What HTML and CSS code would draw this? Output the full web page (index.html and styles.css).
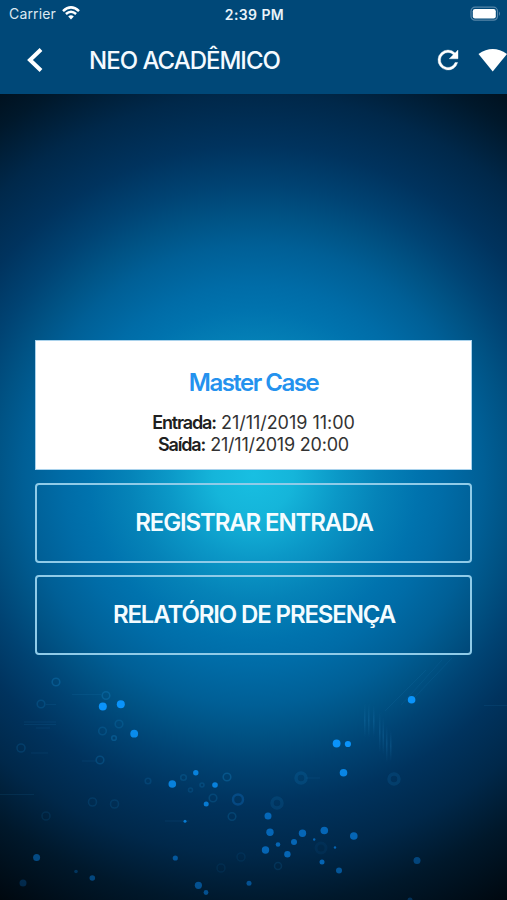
FILE: index.html
```html
<!DOCTYPE html>
<html lang="pt-BR">
<head>
<meta charset="utf-8">
<title>Neo Acadêmico</title>
<link rel="stylesheet" href="styles.css">
</head>
<body>
<div class="screen">
  <header class="top">
    <div class="status">
      <div class="carrier"><span>Carrier</span>
        <svg width="18" height="14" viewBox="0 0 18 14" fill="none" stroke="#fff" stroke-width="2.5"><path d="M1 5.1Q9-2.3 17 5.1M3.9 8Q9 3.4 14.1 8"/><path d="M6.2 10.4Q9 8.2 11.8 10.4L9 13.4Z" fill="#fff" stroke="none"/></svg>
      </div>
      <div class="time">2:39 PM</div>
      <svg class="battery" width="31" height="16" viewBox="0 0 31 16"><rect x="1" y="1.2" width="26.5" height="13" rx="4" fill="none" stroke="#5585a8" stroke-width="1.2"/><rect x="2.8" y="3" width="23" height="9.4" rx="2.2" fill="#fff"/><path d="M29 5.5Q31 7.7 29 9.9Z" fill="#5585a8"/></svg>
    </div>
    <nav class="bar">
      <svg class="back" width="16" height="26" viewBox="0 0 16 26" fill="none" stroke="#fff" stroke-width="4"><path d="M14 2.5L3 13L14 23.5"/></svg>
      <h1>NEO ACADÊMICO</h1>
      <svg class="reload" width="30" height="30" viewBox="0 0 24 24" fill="#fff" stroke="#fff" stroke-width=".3"><path d="M17.65 6.35A7.96 7.96 0 0 0 12 4a8 8 0 1 0 7.73 10h-2.08A6 6 0 1 1 12 6c1.66 0 3.14.69 4.22 1.78L13 11h7V4z"/></svg>
      <svg class="signal" width="30" height="24" viewBox="0 0 30 24" fill="#fff"><path d="M.5 6Q14.7-4 29 6L14.7 23.5Z"/></svg>
    </nav>
  </header>
  <main class="content">
    <svg class="backdrop" width="507" height="806" viewBox="0 94 507 806">
      <defs><linearGradient id="fade" x1="0" y1="0" x2="0" y2="1"><stop offset="0" stop-color="#2288c5" stop-opacity="0"/><stop offset=".5" stop-color="#2288c5" stop-opacity=".22"/><stop offset="1" stop-color="#2288c5" stop-opacity="0"/></linearGradient></defs>
      <g fill="none" stroke="#1687c8" stroke-width="1.6" opacity=".32">
        <circle cx="56" cy="682" r="3.8"/><circle cx="106" cy="695.5" r="3.8"/><circle cx="41" cy="704" r="3.8" opacity=".7"/><circle cx="119" cy="724" r="3.8" opacity=".7"/><circle cx="102.500" cy="731" r="3.8" opacity=".7"/><circle cx="114" cy="738" r="2.300"/><circle cx="21" cy="748" r="4" opacity=".6"/><circle cx="100" cy="760" r="3.8" opacity=".8"/>
        <circle cx="148" cy="781" r="2.8" opacity=".6"/><circle cx="183.500" cy="777.500" r="2.800" opacity=".7"/><circle cx="227" cy="777" r="3.8"/><circle cx="202" cy="785" r="2" opacity=".7"/><circle cx="190.500" cy="790" r="2" opacity=".6"/><circle cx="213" cy="798" r="3.8" opacity=".7"/><circle cx="238" cy="799.500" r="5" stroke="#1278d0" stroke-width="2.5"/><circle cx="232" cy="816.500" r="3.800" opacity=".7"/>
        <circle cx="92.500" cy="802" r="4" opacity=".5"/><circle cx="114.500" cy="804" r="4" opacity=".5"/><circle cx="46" cy="816" r="4" opacity=".4"/><circle cx="241" cy="857" r="4" opacity=".3"/><circle cx="221" cy="868" r="4" opacity=".3"/><circle cx="278" cy="866" r="3.500" opacity=".5"/>
        <circle cx="301" cy="778" r="5" stroke-width="3.5" opacity=".55"/><circle cx="394" cy="779" r="5" stroke-width="3.5" opacity=".5"/><circle cx="277" cy="803" r="5" stroke-width="3.500" opacity=".5"/><circle cx="321" cy="848" r="5" stroke-width="3" opacity=".25"/>
      </g>
      <g stroke="#2288c5" stroke-width="1" opacity=".12" fill="none">
        <path d="M72 694.500h29M46 704.500h10M24 722h32M24 724.500h32M36 728h14M31 753h17M82 761h14M0 794.500h34M306 778h14M484 705.500h23M165 821h24M401 705L442 660M385 711L426 670M415 697L452 658"/>
      </g>
      <g fill="url(#fade)"><rect x="364" y="703" width="1.5" height="35"/><rect x="368" y="703" width="1.500" height="35"/><rect x="373" y="705" width="1.500" height="32"/><rect x="379" y="711" width="1.500" height="42"/><rect x="382.500" y="717" width="1.500" height="38"/><rect x="386" y="725" width="1.500" height="38"/><rect x="390" y="730" width="1.500" height="32"/></g>
      <g fill="#0a93fa">
        <circle cx="102.800" cy="706.500" r="4"/><circle cx="120.800" cy="704.300" r="4"/><circle cx="134.200" cy="733.700" r="3.900" opacity=".9"/><circle cx="411.600" cy="699.700" r="3.800"/><circle cx="336.600" cy="743.500" r="3.900"/><circle cx="347.900" cy="744" r="3.100"/><circle cx="343.500" cy="772.700" r="3.800" opacity=".85"/>
        <circle cx="195.800" cy="772.800" r="2.700" opacity=".8"/><circle cx="172.300" cy="784" r="3.800" opacity=".8"/><circle cx="215" cy="785" r="2.800" opacity=".8"/><circle cx="206.200" cy="804" r="2.500" opacity=".75"/><circle cx="185" cy="821.300" r="1.500" opacity=".75"/>
      </g>
      <g fill="#087cdb" opacity=".74">
        <circle cx="268" cy="816" r="3.500"/><circle cx="270" cy="832.300" r="3.700"/><circle cx="302.500" cy="833.300" r="3.700"/><circle cx="324.300" cy="830.500" r="3.800"/><circle cx="353.800" cy="836" r="3.800"/><circle cx="294" cy="842" r="3"/><circle cx="278" cy="844.500" r="2.300"/><circle cx="265.500" cy="850" r="3.700"/><circle cx="287.400" cy="854.200" r="3.200"/><circle cx="314.200" cy="839.500" r="1.200"/><circle cx="335" cy="847.500" r="1.200"/><circle cx="322" cy="862" r="2.500"/><circle cx="339" cy="870.500" r="3" opacity=".8"/><circle cx="417" cy="860.500" r="3.500" opacity=".6"/>
        <circle cx="36.600" cy="857.500" r="3.500" opacity=".7"/><circle cx="92.300" cy="878" r="2.800" opacity=".65"/><circle cx="76" cy="871.500" r="1.800" opacity=".4"/><circle cx="23" cy="883" r="3.500" opacity=".35"/><circle cx="175.300" cy="858" r="2.600" opacity=".8"/><circle cx="198.400" cy="885.300" r="3.600" opacity=".75"/><circle cx="206" cy="892.500" r="2.400" opacity=".75"/><circle cx="249" cy="883.300" r="2.500" opacity=".75"/><circle cx="410" cy="900" r="2.500" opacity=".4"/>
      </g>
    </svg>
    <section class="card">
      <h2>Master Case</h2>
      <p class="in"><b>Entrada:</b> <span>21/11/2019 11:00</span></p>
      <p class="out"><b>Saída:</b> <span>21/11/2019 20:00</span></p>
    </section>
    <button class="btn"><span class="register">REGISTRAR ENTRADA</span></button>
    <button class="btn"><span class="report">RELATÓRIO DE PRESENÇA</span></button>
  </main>
</div>
</body>
</html>
```

FILE: styles.css
```css
* { box-sizing: border-box; }
body { margin: 0; font-family: Inter, "Liberation Sans", sans-serif; color: #fff; }
h1, h2, p { margin: 0; }
svg { display: block; flex: none; }
.screen { width: 507px; height: 900px; overflow: hidden; display: flex; flex-direction: column; }
.top { height: 94px; background: #004878; flex: none; }
.status { height: 28px; display: grid; grid-template-columns: 1fr auto 1fr; align-items: center; padding: 0 6px 0 9px; }
.carrier { display: flex; align-items: center; gap: 6px; font-size: 14px; letter-spacing: .15px; color: #dce8f1; }
.carrier span { margin-top: -1px; }
.carrier svg { margin-top: -2px; }
.time { font-size: 14px; font-weight: 600; letter-spacing: .4px; color: #eaf3fa; margin-left: -1px; }
.battery { justify-self: end; margin-top: -1px; }
.bar { height: 64px; display: flex; align-items: center; padding-left: 27px; }
.back { margin-right: 46px; }
h1 { flex: 1; font-size: 24px; font-weight: 500; letter-spacing: -1px; line-height: 30px; padding-top: 1px; color: #f4faff; white-space: nowrap; }
.reload { margin-right: 15px; }
.signal { margin-right: -1px; }
.content {
  flex: 1; position: relative; padding: 246px 35px 0; display: flex; flex-direction: column;
  background: radial-gradient(circle 500px at 50% 381px, #18bfe2 0, #15b5da 40px, #0b98c7 85px, #0583b8 125px, #0073ae 165px, #006ca7 190px, #005f96 230px, #005385 258px, #004373 290px, #00335e 330px, #00284a 380px, #00182b 430px, #00080f 495px);
}
.backdrop { position: absolute; top: 0; left: 0; }
.card, .btn { position: relative; width: 437px; }
.card { height: 130px; background: #fff; border: 1px solid #a9d2ec; padding-top: 27px; text-align: center; color: #333; font-size: 18px; line-height: 22px; }
.card h2 { color: #2492ee; font-size: 24px; font-weight: 600; line-height: 30px; letter-spacing: -1.5px; margin-bottom: 14px; height: 30px; }
.card p { white-space: nowrap; letter-spacing: -.03px; }
.card .out span { letter-spacing: -.2px; }
.card b { color: #202020; font-weight: 600; letter-spacing: -1.15px; }
.btn { height: 80px; margin-top: 13px; padding: 0 0 0 1px; background: none; border: 2px solid #8fcbe8; border-radius: 4px; font: 600 24px/30px Inter, "Liberation Sans", sans-serif; color: #f4fcff; letter-spacing: -1.13px; }
.btn + .btn { margin-top: 12px; }
```
